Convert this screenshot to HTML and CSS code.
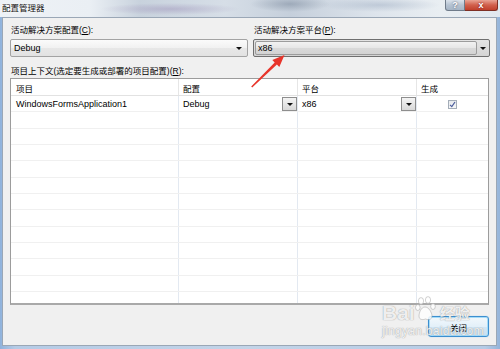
FILE: index.html
```html
<!DOCTYPE html>
<html lang="zh-CN">
<head>
    <meta charset="UTF-8">
    <meta name="viewport" content="width=device-width, initial-scale=1.0">
    <title>配置管理器</title>
    <link rel="stylesheet" href="styles.css">
</head>
<body>
<div class="titlebar">
    <span class="title">配置管理器</span>
    <div class="caption-buttons">
        <span class="cap-btn help">?</span>
        <span class="cap-btn close">x</span>
    </div>
</div>
<div class="client">
    <div class="top-fields">
        <div class="field">
            <div class="label">活动解决方案配置(<u>C</u>):</div>
            <div class="combo"><span class="combo-text">Debug</span><i class="arrow"></i></div>
        </div>
        <div class="field">
            <div class="label">活动解决方案平台(<u>P</u>):</div>
            <div class="combo combo-hot"><span class="combo-text">x86</span><span class="combo-btn"><i class="arrow"></i></span></div>
        </div>
    </div>
    <div class="label label-list">项目上下文(选定要生成或部署的项目配置)(<u>R</u>):</div>
    <div class="grid">
        <div class="row head">
            <div class="cell">项目</div>
            <div class="cell">配置</div>
            <div class="cell">平台</div>
            <div class="cell">生成</div>
        </div>
        <div class="row">
            <div class="cell">WindowsFormsApplication1</div>
            <div class="cell"><span>Debug</span><span class="drop"><i class="arrow"></i></span></div>
            <div class="cell"><span>x86</span><span class="drop"><i class="arrow"></i></span></div>
            <div class="cell center">
                <span class="check">
                    <svg width="7" height="7" viewBox="0 0 7 7"><path d="M1 3.8 L2.8 5.6 L6 1" fill="none" stroke="#4a5c9c" stroke-width="1.2"/></svg>
                </span>
            </div>
        </div>
        <div class="row"><div class="cell"></div><div class="cell"></div><div class="cell"></div><div class="cell"></div></div>
        <div class="row"><div class="cell"></div><div class="cell"></div><div class="cell"></div><div class="cell"></div></div>
        <div class="row"><div class="cell"></div><div class="cell"></div><div class="cell"></div><div class="cell"></div></div>
        <div class="row"><div class="cell"></div><div class="cell"></div><div class="cell"></div><div class="cell"></div></div>
        <div class="row"><div class="cell"></div><div class="cell"></div><div class="cell"></div><div class="cell"></div></div>
        <div class="row"><div class="cell"></div><div class="cell"></div><div class="cell"></div><div class="cell"></div></div>
        <div class="row"><div class="cell"></div><div class="cell"></div><div class="cell"></div><div class="cell"></div></div>
        <div class="row"><div class="cell"></div><div class="cell"></div><div class="cell"></div><div class="cell"></div></div>
        <div class="row"><div class="cell"></div><div class="cell"></div><div class="cell"></div><div class="cell"></div></div>
        <div class="row"><div class="cell"></div><div class="cell"></div><div class="cell"></div><div class="cell"></div></div>
        <div class="row"><div class="cell"></div><div class="cell"></div><div class="cell"></div><div class="cell"></div></div>
        <div class="row"><div class="cell"></div><div class="cell"></div><div class="cell"></div><div class="cell"></div></div>
    </div>
    <div class="footer">
        <button class="btn">关闭</button>
    </div>
</div>

<!-- red annotation arrow -->
<svg class="pointer" width="500" height="349" viewBox="0 0 500 349">
    <polygon points="284.5,55 279.3,67 276.9,64.6 252.2,87.4 251.2,86.4 274.7,62.4 272.3,60" fill="#e8352b"/>
</svg>

<!-- watermark -->
<div class="watermark">
    <div class="wm-logo">
        <span class="wm-bai">Bai</span>
        <svg class="wm-paw" width="22" height="26" viewBox="0 0 22 26">
            <g fill="rgba(255,255,255,0.8)" stroke="rgba(150,150,150,0.55)" stroke-width="0.8">
                <ellipse cx="6" cy="5" rx="2.6" ry="3.4"/>
                <ellipse cx="13" cy="4" rx="2.6" ry="3.4"/>
                <ellipse cx="2.8" cy="11.5" rx="2.3" ry="3"/>
                <ellipse cx="18" cy="10.5" rx="2.3" ry="3"/>
                <path d="M10 11 C6 11 4 17 4 20 C4 24 8 24 10.5 23 C13 24 17 24 17 20 C17 17 14 11 10 11 Z"/>
            </g>
        </svg>
        <span class="wm-jy">经验</span>
    </div>
    <div class="wm-url">jingyan.baidu.com</div>
</div>
</body>
</html>
```

FILE: styles.css
```css
html, body {
    margin: 0;
    height: 100%;
    overflow: hidden;
}
body {
    display: flex;
    flex-direction: column;
    box-sizing: border-box;
    padding: 0 3px 3px 2px;
    background: linear-gradient(to right, #8fb2dc, #b5cbe6 3%, #c3d4e8 50%, #b5cbe6 97%, #94b4da);
    font-family: "Liberation Sans", "Noto Sans CJK SC", sans-serif;
    font-size: 9px;
    color: #000;
    position: relative;
}
.titlebar {
    height: 17px;
    margin: 0 -3px 0 -2px;
    display: flex;
    align-items: flex-start;
    justify-content: space-between;
    background:
        radial-gradient(ellipse 70px 6px at 170px 9px, rgba(140, 120, 170, 0.35), transparent),
        radial-gradient(ellipse 40px 8px at 290px 4px, rgba(110, 125, 145, 0.45), transparent),
        radial-gradient(ellipse 60px 7px at 380px 5px, rgba(160, 175, 195, 0.5), transparent),
        linear-gradient(to right, #eef2f6 0, #eaeff4 18%, #c8d2dd 28%, #d6dee7 45%, #c5cfdb 58%, #dde4ec 75%, #e9eef2 88%, #e1e8ef 100%);
}
.title {
    font-family: "Noto Sans CJK SC", sans-serif;
    font-size: 8.5px;
    line-height: 15px;
    padding-left: 2px;
    color: #111;
    text-shadow: 0 0 3px #fff, 0 0 2px #fff;
}
.caption-buttons {
    display: flex;
    margin-right: 2px;
}
.cap-btn {
    height: 11px;
    box-sizing: border-box;
    display: flex;
    align-items: center;
    justify-content: center;
    color: #fff;
    font-weight: bold;
    font-size: 9px;
    line-height: 9px;
    border: 1px solid #6f7b8a;
    border-top: none;
}
.help {
    width: 20px;
    border-radius: 0 0 0 3px;
    background: linear-gradient(#dbe3ec, #b6c3d2 50%, #a6b5c6);
    text-shadow: 0 0 2px #445;
}
.close {
    width: 33px;
    border-left: none;
    border-color: #7e2f24;
    border-radius: 0 0 3px 0;
    background: linear-gradient(#e9a394, #d1604c 50%, #c0402c);
    text-shadow: 0 0 2px #600;
}
.client {
    flex: 1;
    background: #f0f0f0;
    border: 1px solid #9aa7b6;
    padding: 6px 6px 8px 7px;
    display: flex;
    flex-direction: column;
}
.top-fields {
    display: grid;
    grid-template-columns: 238px 237px;
    column-gap: 5px;
}
.label {
    font-family: "Liberation Sans", "Noto Sans CJK SC", sans-serif;
    font-size: 8.5px;
    height: 13px;
    line-height: 13px;
    padding-left: 1px;
    white-space: nowrap;
}
.label u {
    text-underline-offset: 1px;
}
.combo {
    margin-top: 2px;
    height: 18px;
    box-sizing: border-box;
    border: 1px solid #a3a3a3;
    border-radius: 2px;
    background: linear-gradient(#fbfbfb, #f1f1f1 50%, #e7e7e7 51%, #e2e2e2);
    display: flex;
    align-items: center;
    justify-content: space-between;
    padding: 0 5px 0 3px;
}
.combo-text {
    font-size: 9px;
}
.arrow {
    display: block;
    width: 0;
    height: 0;
    border-left: 3px solid transparent;
    border-right: 3px solid transparent;
    border-top: 3px solid #111;
}
.combo-hot {
    border-color: #6f6f6f;
    padding: 1px 0 1px 1px;
    background: linear-gradient(#e4e4e4, #d4d4d4);
}
.combo-hot .combo-text {
    flex: 1;
    align-self: stretch;
    display: flex;
    align-items: center;
    padding-left: 2px;
    border: 1px solid #9c9c9c;
    border-radius: 2px;
    background: linear-gradient(#f2f2f2, #e6e6e6 50%, #d9d9d9 51%, #d3d3d3);
}
.combo-btn {
    width: 12px;
    display: flex;
    justify-content: center;
}
.label-list {
    margin-top: 8px;
}
.grid {
    height: 227px;
    margin-right: 1px;
    box-sizing: border-box;
    border: 1px solid #9c9c9c;
    border-bottom: 2px solid #a9a9a9;
    background: #fff;
    overflow: hidden;
}
.row {
    display: grid;
    grid-template-columns: 168px 119px 119px 1fr;
    height: 16.33px;
    box-sizing: border-box;
    border-bottom: 1px solid #f0f0f0;
}
.row.head {
    height: 17px;
    border-bottom: 1px solid #e2e2e2;
}
.cell {
    display: flex;
    align-items: center;
    justify-content: space-between;
    padding-left: 4px;
    border-right: 1px solid #e3e9f1;
    white-space: nowrap;
    overflow: hidden;
    font-size: 9px;
}
.row .cell:first-child {
    padding-left: 5px;
}
.row .cell:last-child {
    border-right: none;
}
.head .cell {
    font-size: 8.5px;
    border-right-color: #e6e6e6;
    padding-top: 2px;
}
.cell.center {
    justify-content: center;
    padding-left: 0;
}
.drop {
    width: 15px;
    align-self: stretch;
    margin-top: 1px;
    box-sizing: border-box;
    border: 1px solid #8e8e8e;
    background: linear-gradient(#f4f4f4, #e6e6e6 50%, #d8d8d8);
    display: flex;
    align-items: center;
    justify-content: center;
}
.check {
    width: 9px;
    height: 9px;
    box-sizing: border-box;
    border: 1px solid #a4adb8;
    background: linear-gradient(#e6e9ed, #f6f7f8);
    display: flex;
    align-items: center;
    justify-content: center;
    margin-top: 1px;
}
.footer {
    display: flex;
    justify-content: flex-end;
    margin-top: 11px;
}
.btn {
    width: 61px;
    height: 21px;
    margin-right: 1px;
    font-family: "Noto Sans CJK SC", sans-serif;
    font-size: 8.5px;
    color: #000;
    border: 1px solid #3c8fd0;
    border-radius: 3px;
    background: linear-gradient(#f2f8fc, #e3f0f9 50%, #d2e6f4 51%, #c8e0f1);
    box-shadow: inset 0 0 0 1px #a6dcf8, 0 0 1px #7fc4ee;
    padding: 0;
}
.pointer {
    position: absolute;
    left: 0;
    top: 0;
    pointer-events: none;
}
.watermark {
    position: absolute;
    left: 382px;
    top: 294px;
    pointer-events: none;
    color: rgba(255, 255, 255, 0.85);
    text-shadow: 0 0 1px rgba(120, 120, 120, 0.6), 0 0 1px rgba(120, 120, 120, 0.4);
}
.wm-logo {
    display: flex;
    align-items: flex-end;
    height: 30px;
}
.wm-bai {
    font-family: "Liberation Sans", sans-serif;
    font-weight: bold;
    font-size: 21px;
    line-height: 22px;
}
.wm-paw {
    margin: 0 1px 2px 0;
}
.wm-jy {
    font-family: "Noto Sans CJK SC", sans-serif;
    font-size: 15px;
    line-height: 22px;
    font-weight: bold;
    margin-left: 2px;
}
.wm-url {
    font-family: "Liberation Sans", sans-serif;
    font-size: 12px;
    line-height: 14px;
    letter-spacing: 0.3px;
    margin-top: 0;
}
```
